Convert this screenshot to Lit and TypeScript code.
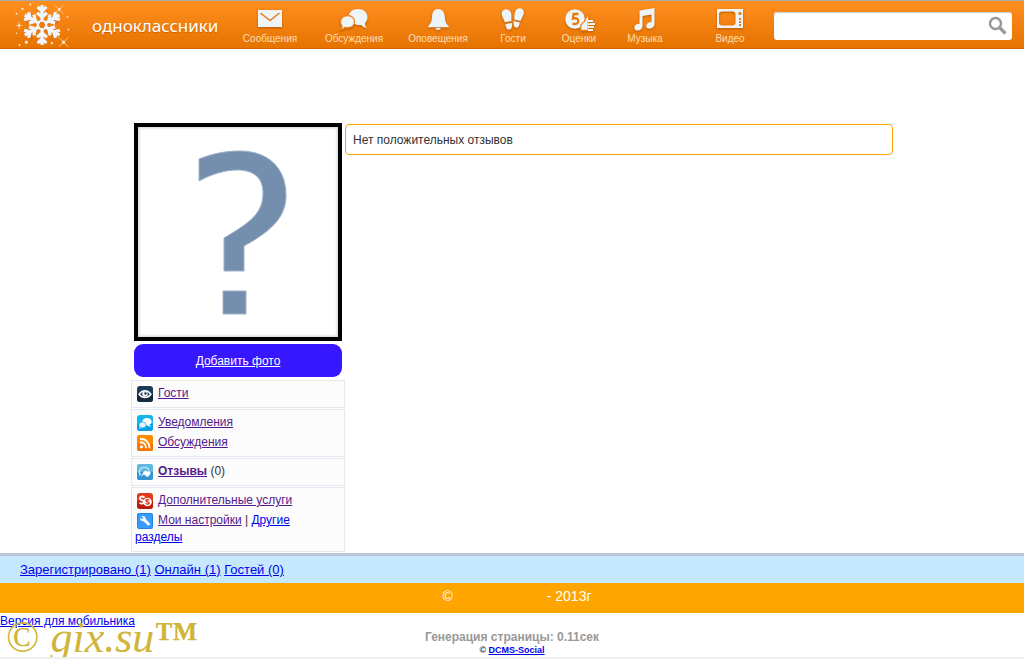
import { LitElement, html, css, svg } from "lit";
import { customElement } from "lit/decorators.js";

const navItems = [
  {
    label: "Сообщения",
    cls: "wide",
    icon: svg`<path d="M4 2h24v17H4z"/><path class="cut" d="M6.500 5l9.500 7.500L25.500 5"/>`,
  },
  {
    label: "Обсуждения",
    cls: "wide",
    icon: svg`<path d="M20 1c5.500 0 9.500 3.400 9.500 8 0 2.700-1 4.800-2.600 6.200.1 2.200.8 3.600 2 5-2.500-.4-4.200-1.500-5.500-3.200-2 .3-4.200 0-6-.8-4-1.300-6.900-3.800-6.900-7.200C10.500 4.400 14.500 1 20 1z"/><path class="ring" d="M9.500 7.500c4 0 7 2.600 7 6.200s-3 6-7 6c-1 0-1.800-.1-2.500-.4-1 1.300-2.500 2-4.500 2.200 1-1.200 1.500-2.200 1.500-3.500-1-1.100-1.500-2.600-1.500-4.300 0-3.600 3-6.200 7-6.200z"/>`,
  },
  {
    label: "Оповещения",
    cls: "wide",
    icon: svg`<path d="M16 1c5 0 6.600 4 6.800 8 .2 4 1 6.500 4 9.500v.7H6v-.7c3-3 3.800-5.500 4-9.500C10.200 5 11.400 1 16 1z"/><path d="M13.500 20h5.400c-.5 1.300-1.400 2-2.700 2s-2.300-.7-2.700-2z"/>`,
  },
  {
    label: "Гости",
    cls: "mid",
    icon: svg`<path d="M8.500 1.200c2.700-.4 5 1.400 5.700 4.300.5 2.500 0 4.700.3 7.600l-6.600 1.200C7 11.500 5 8.700 4.700 6.200c-.3-2.600 1.200-4.600 3.800-5z"/><path d="M8.500 16l6.300-1c.7 3.700-.3 6.200-2.300 6.600-2.400.4-3.800-1.700-4-5.600z"/><path d="M23.200.2c2.700.4 4.100 2.600 3.600 5.300-.5 2.600-2.200 4.600-3.300 7.400l-6.300-1.500c.3-2.500 0-4.700.8-7.200C18.800 1.400 20.800-.1 23.200.200z"/><path d="M16.800 13l6 1.400c-.6 4-2 5.800-4.200 5.200-1.900-.5-2.500-3-1.800-6.600z"/>`,
  },
  {
    label: "Оценки",
    cls: "mid",
    icon: svg`<circle cx="12" cy="11" r="9.800"/><path class="cut five" d="M15.500 6h-5l-.5 4.500c4-.8 5.500.6 5.200 2.800-.3 2.500-3 3.200-5.700 2.300"/><path class="ring" d="M18 22.500c-1-4 .5-7.500 3.500-9 1-2 1.700-4 2.500-6 2.200.2 2 3 1.300 6v9z"/><path d="M25 12h5v2h-5zM25 15h7v2h-7zM25 18h6v2h-6zM25 21h5v2h-5z"/>`,
  },
  {
    label: "Музыка",
    cls: "mid",
    icon: svg`<path d="M10.500 2.500L25.500 0v16c0 2.500-1.600 4.200-4.300 4.600-2.400.3-4-.8-4-2.700 0-2.300 2-4 5.300-4V6.500l-9 1.600V18c0 2.500-1.700 4.200-4.300 4.500-2.300.2-3.900-.9-3.900-2.800 0-2.300 2-3.900 5.200-3.900z"/>`,
  },
  {
    label: "Видео",
    cls: "video",
    icon: svg`<path fill-rule="evenodd" d="M3 1h26v19H3zM7.500 3.500C5.500 4 5.200 4.500 5 6.500v8c.2 2 .5 2.500 2.500 3h11.500c2-.5 2.300-1 2.500-3v-8c-.2-2-.5-2.500-2.500-3z"/><circle class="hole" cx="26" cy="5.500" r="1.700"/><path class="hole" d="M25 10h2v2h-2zM25 13h2v2h-2zM25 16h2v2h-2z"/>`,
  },
];

const icons = {
  eye: svg`<rect width="16" height="16" rx="3" fill="#1d3a58"/><path d="M0 8h16v5a3 3 0 0 1-3 3H3a3 3 0 0 1-3-3z" fill="#17293d"/><path d="M2 8.300c3.300-4.700 8.700-4.700 12 0-3.300 4.300-8.700 4.300-12 0z" fill="none" stroke="#fff" stroke-width="1.400"/><circle cx="8" cy="8" r="2.800" fill="#fff"/><circle cx="8.500" cy="7.500" r="1.200" fill="#17293d"/>`,
  chat: svg`<rect width="16" height="16" rx="3" fill="#12b5ee"/><path d="M0 9h16v4a3 3 0 0 1-3 3H3a3 3 0 0 1-3-3z" fill="#0a9fe0"/><ellipse cx="10" cy="6.700" rx="4.600" ry="3.700" fill="#fff"/><path d="M12 9l2 3-4-1.500zM3 11l-1 3 4-2z" fill="#fff"/><ellipse cx="5.500" cy="10" rx="3.600" ry="2.900" fill="#e4f5ff" stroke="#12b5ee" stroke-width=".7"/>`,
  feed: svg`<rect width="16" height="16" rx="2" fill="#ff8a00"/><path d="M0 9h16v5a2 2 0 0 1-2 2H2a2 2 0 0 1-2-2z" fill="#fb7500"/><circle cx="4.500" cy="11.800" r="1.600" fill="#fff"/><path d="M3 7.200c4 0 6 2.500 6 6M3 3.700c6 0 9.500 4 9.500 9.600" fill="none" stroke="#fff" stroke-width="1.900"/>`,
  reviews: svg`<rect width="16" height="16" rx="2" fill="#5fb7e2"/><path d="M0 8h16v6a2 2 0 0 1-2 2H2a2 2 0 0 1-2-2z" fill="#3494d3"/><path d="M3.500 11.500C.5 7 3.500 3 7.500 3.200c2.500 0 4 1.600 4.500 3.300" fill="none" stroke="#b8e2f7" stroke-width="1.500"/><path d="M7 7.500c1.500-1 2.500-.8 3.500.2 1.200-1 2.800-.5 3 1 .1 1.600-1.300 3-3 4.300-2-1-3-2-3.500-3-.8.8-1.500 2-3 2.300C5.500 11 5 9.500 7 7.500z" fill="#fff"/>`,
  money: svg`<rect width="16" height="16" rx="3" fill="#e5391b"/><path d="M0 8h16v5a3 3 0 0 1-3 3H3a3 3 0 0 1-3-3z" fill="#bd1d08"/><path d="M7.500 4.500C5.500 2.800 2.800 3.600 2.900 5.500 3.100 7.700 7 6.800 7 9c0 1.900-2.600 2.100-4.500.8" fill="none" stroke="#fff" stroke-width="1.900"/><circle cx="10.500" cy="9" r="4.300" fill="#fff"/><path d="M12.300 7.300c-1.600-1-3.300-.6-3.300.4 0 1.300 3.200.8 3.200 2.300 0 1.300-2.200 1.400-3.500.5" fill="none" stroke="#d42b12" stroke-width="1.300"/>`,
  wrench: svg`<rect width="16" height="16" rx="2" fill="#2484e8"/><rect x="1" y="1" width="14" height="14" rx="1.500" fill="#3b9bfa"/><path d="M4.500 3.200c2-.8 4.300.4 4.200 2.900l4 4.200c.6 1.400-.6 2.600-2 2L6.600 8.300C4.400 8.600 2.700 6.600 3.400 4.500l1.800 1.700 1.200-1.100z" fill="#fff"/>`,
};

const icon = (name: keyof typeof icons) =>
  html`<svg class="ico" viewBox="0 0 16 16" aria-hidden="true">${icons[name]}</svg>`;

@customElement("site-header")
class SiteHeader extends LitElement {
  static styles = css`
    :host {
      display: block;
      font-family: "Liberation Sans", Arial, sans-serif;
    }
    .bar {
      box-sizing: border-box;
      height: 49px;
      display: flex;
      align-items: center;
      padding: 2px 12px 0 0;
      border-top: 1px solid #aaa;
      border-bottom: 1px solid #cf6500;
      background: linear-gradient(#ff8f20, #e57300);
    }
    .brand {
      width: 228px;
      flex: none;
      display: flex;
      align-items: center;
      text-decoration: none;
      color: #fff;
    }
    .flake {
      width: 64px;
      height: 45px;
      margin: 0 16px 0 12px;
    }
    .name {
      font: 17px/24px "Noto Sans", sans-serif;
      text-shadow: 0 1px 1px #c86000;
    }
    .nav {
      display: flex;
      flex: none;
    }
    .item {
      display: flex;
      flex-direction: column;
      align-items: center;
      text-decoration: none;
      color: #ffdcb4;
      font-size: 10px;
      line-height: 12px;
      padding-top: 2px;
    }
    .wide {
      width: 84px;
    }
    .mid {
      width: 66px;
    }
    .video {
      width: 72px;
      margin: 0 8px 0 16px;
    }
    .glyph {
      width: 32px;
      height: 24px;
      margin-bottom: 1px;
      fill: #eef5f8;
      filter: drop-shadow(0 1px 1px #b85a00);
    }
    .cut {
      fill: none;
      stroke: #e87a0c;
      stroke-width: 1.5;
    }
    .five {
      stroke-width: 2.3;
    }
    .ring {
      stroke: #f5820f;
      stroke-width: 1.3;
    }
    .hole {
      fill: #f07d10;
    }
    .search {
      flex: 1;
      min-width: 0;
      height: 28px;
      display: flex;
      align-items: center;
      background: #fff;
      border-radius: 3px;
      box-shadow: inset 0 1px 1px #ccc;
    }
    .query {
      flex: 1;
      min-width: 0;
      border: 0;
      outline: 0;
      background: none;
      font: inherit;
      padding: 0 8px;
    }
    .go {
      border: 0;
      background: none;
      padding: 0 5px 0 0;
      display: flex;
    }
    .lens {
      width: 19px;
      height: 19px;
      fill: none;
      stroke: #999;
    }
  `;

  render() {
    const arms = [0, 60, 120, 180, 240, 300];
    return html`
      <header class="bar">
        <a class="brand" href="#">
          <svg class="flake" viewBox="0 0 64 46" aria-hidden="true">
            <g stroke="#ffd29c" stroke-width=".8">
              <path d="M43 2l9 9M52 2l-9 9M47 35l10 10M57 35l-10 10M3 23h7M6.500 19v8" />
            </g>
            <g fill="#ffe6c8">
              <circle cx="4" cy="11" r="1" /><circle cx="10" cy="6" r="1.200" /><circle cx="18" cy="1.500" r="1" />
              <circle cx="4" cy="31" r=".8" /><circle cx="7" cy="43" r="1" /><circle cx="14" cy="40" r="1.600" />
              <circle cx="47.500" cy="6.500" r="1.300" /><circle cx="52" cy="40" r="1.600" /><circle cx="56" cy="14" r="1" />
              <circle cx="57" cy="27" r=".9" /><circle cx="40" cy="41" r="1.200" /><circle cx="6.500" cy="23" r="1.200" />
            </g>
            <g fill="none" stroke="#c9622a" stroke-opacity=".35" stroke-width="4.500" transform="translate(30 24)">
              ${arms.map((a) => svg`<path transform="rotate(${a})" d="M0-3V-19M-5-17L0-12.500 5-17"/>`)}
            </g>
            <g fill="none" stroke="#f0f6ff" stroke-width="3.300" transform="translate(30 22.500)">
              ${arms.map(
                (a) => svg`<path transform="rotate(${a})" d="M0-3V-20.500M-4.500-18.500L0-14 4.500-18.500M-5-12.500L0-8 5-12.500"/>`
              )}
              <circle r="4.500" stroke-width="2" />
            </g>
          </svg>
          <span class="name">одноклассники</span>
        </a>
        <nav class="nav">
          ${navItems.map(
            (n) => html`<a class="item ${n.cls}" href="#">
              <svg class="glyph" viewBox="0 0 32 24" aria-hidden="true">${n.icon}</svg>${n.label}</a>`
          )}
        </nav>
        <form class="search" role="search">
          <input class="query" type="text" aria-label="Поиск" />
          <button class="go" type="button" aria-label="Найти">
            <svg class="lens" viewBox="0 0 19 19">
              <circle cx="7.500" cy="7.500" r="5.500" stroke-width="2.500" />
              <path d="M11.500 11.500l6 6" stroke-width="3.200" />
            </svg>
          </button>
        </form>
      </header>
    `;
  }
}

@customElement("app-root")
class AppRoot extends LitElement {
  static styles = css`
    :host {
      display: block;
      min-height: 100vh;
      box-sizing: border-box;
      background: #fff;
      font: 12px/17px "Liberation Sans", Arial, sans-serif;
      color: #333;
    }
    a {
      color: #00e;
    }
    .seen {
      color: #551a8b;
    }
    .page {
      display: flex;
      align-items: flex-start;
      max-width: 762px;
      margin: 0 auto;
      padding-top: 74px;
    }
    .side {
      width: 214px;
      flex: none;
    }
    .photo {
      height: 210px;
      margin: 0 3px;
      border: 4px solid #000;
      box-shadow: inset 0 0 3px 1px #c5d3de;
      display: flex;
      justify-content: center;
    }
    .mark {
      width: 200px;
      height: 210px;
      fill: #748fae;
      stroke: #9fb2c7;
    }
    .add {
      display: block;
      margin: 3px;
      padding: 9px 0 7px;
      border-radius: 9px;
      background: #3617ff;
      color: #fff;
      text-align: center;
    }
    .box {
      padding: 3px 16px 3px 3px;
      margin-bottom: 1px;
      border: 1px solid #e5e8ee;
      background: #fcfcfc;
    }
    .row {
      padding: 1px 0 2px;
    }
    .ico {
      width: 16px;
      height: 16px;
      margin: 1px 5px 0 2px;
      float: left;
    }
    .notice {
      flex: 1;
      margin-top: 1px;
      padding: 7px 7px 5px;
      border: 1px solid #ffa500;
      border-radius: 4px;
    }
    .stats {
      padding: 0 20px;
      border-top: 3px solid #bdc6d9;
      background: #c6e8ff;
      font-size: 13px;
      line-height: 27px;
    }
    .copy {
      display: flex;
      justify-content: center;
      gap: 94px;
      padding: 0 0 3px 10px;
      background: #ffa500;
      color: #fff;
      font-size: 14px;
      line-height: 27px;
    }
    .end {
      position: relative;
      height: 44px;
      border-bottom: 2px solid #f0f0f0;
      overflow: hidden;
    }
    .mobile {
      line-height: 15px;
    }
    .gen {
      text-align: center;
      font-weight: bold;
      color: #999;
      line-height: 15px;
    }
    .engine {
      text-align: center;
      font-size: 9px;
      line-height: 11px;
      font-weight: bold;
    }
    .stamp {
      position: absolute;
      left: 6px;
      top: 2px;
      font: italic 44px/46px "Liberation Serif", serif;
      color: #cfb53b;
      white-space: nowrap;
    }
    .upright {
      font-style: normal;
    }
    .tm {
      font-style: normal;
      font-weight: bold;
    }
  `;

  render() {
    return html`
      <site-header></site-header>
      <main class="page">
        <aside class="side">
          <div class="photo">
            <svg class="mark" viewBox="0 0 200 210" role="img" aria-label="Нет фото">
              <path
                d="M61 32C76 26 89 24 102 24c28 0 46 17 46 44 0 20-11 34-42 51v25H86v-33c27-16 39-25 39-45 0-15-9-23-26-23-12 0-25 4-38 11zM85 164h23v23H85z"
              />
            </svg>
          </div>
          <a class="add" href="#">Добавить фото</a>
          <div class="box">
            <div class="row">${icon("eye")}<a class="seen" href="#">Гости</a></div>
          </div>
          <div class="box">
            <div class="row">${icon("chat")}<a class="seen" href="#">Уведомления</a></div>
            <div class="row">${icon("feed")}<a class="seen" href="#">Обсуждения</a></div>
          </div>
          <div class="box">
            <div class="row">${icon("reviews")}<a class="seen" href="#"><b>Отзывы</b></a> (0)</div>
          </div>
          <div class="box">
            <div class="row">${icon("money")}<a class="seen" href="#">Дополнительные услуги</a></div>
            <div class="row">
              ${icon("wrench")}<a class="seen" href="#">Мои настройки</a> | <a href="#">Другие разделы</a>
            </div>
          </div>
        </aside>
        <section class="notice">Нет положительных отзывов</section>
      </main>
      <footer>
        <div class="stats">
          <a href="#">Зарегистрировано (1)</a> <a href="#">Онлайн (1)</a> <a href="#">Гостей (0)</a>
        </div>
        <div class="copy"><span>©</span><span>- 2013г</span></div>
        <div class="end">
          <a class="mobile" href="#">Версия для мобильника</a>
          <div class="gen">Генерация страницы: 0.11сек</div>
          <div class="engine">© <a href="#">DCMS-Social</a></div>
          <div class="stamp"><span class="upright">©</span> gix.su<span class="tm">™</span></div>
        </div>
      </footer>
    `;
  }
}
